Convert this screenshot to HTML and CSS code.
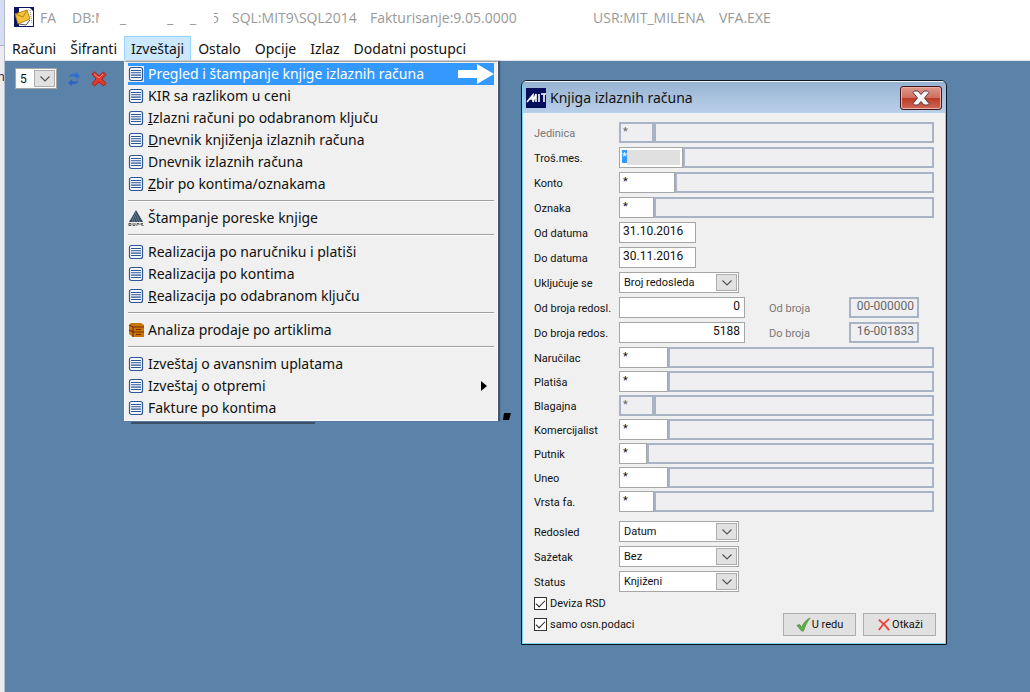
FILE: index.html
```
<!DOCTYPE html>
<html lang="sr-Latn">
<head>
<meta charset="utf-8">
<title>Fakturisanje</title>
<link rel="stylesheet" href="styles.css">
</head>
<body>
<svg class="defs" aria-hidden="true">
  <symbol id="list" viewBox="0 0 16 16"><rect x="1.5" y="1.5" width="13" height="13" rx="2" fill="#f4f9ff" stroke="#2b5797" stroke-width="1.2"/><path d="M3 4.500h10M3 6.800h10M3 9.100h10M3 11.500h10" stroke="#2b5797" stroke-width="1.100"/></symbol>
  <symbol id="chev" viewBox="0 0 12 8"><path d="M1.500 1.500L6 6l4.500-4.500" fill="none" stroke="#555" stroke-width="1.200"/></symbol>
</svg>
<div class="screen">
  <div class="edge"><span class="edge-top"></span><span class="edge-text">n</span></div>
  <div class="app">
    <header class="titlebar">
      <svg class="app-icon" viewBox="0 0 20 20"><rect width="20" height="20" fill="#0b1560"/><path d="M5 1h11l3 3v15H5z" fill="#fff"/><path d="M16 3l2 14" stroke="#889" stroke-dasharray="1 1"/><path d="M1 7l12-4 3 9-12 5z" fill="#f3c13a" stroke="#a97608" stroke-width=".8"/><path d="M1 7l8 3 4-7" fill="none" stroke="#b8860b"/><path d="M5 17l7 1 4-5" fill="none" stroke="#555"/></svg>
      <span class="t-fa">FA</span><span class="t-db">DB:M</span><span class="t-m1">_</span><span class="t-m2">_</span><span class="t-m3">_</span><span class="t-five"><span>5</span></span><span class="t-sql">SQL:MIT9\SQL2014</span><span class="t-ver">Fakturisanje:9.05.0000</span><span class="t-usr">USR:MIT_MILENA</span><span>VFA.EXE</span>
    </header>
    <nav class="menubar">
      <button>Računi</button><button>Šifranti</button><button class="open">Izveštaji</button><button>Ostalo</button><button>Opcije</button><button>Izlaz</button><button>Dodatni postupci</button>
    </nav>
    <main class="workspace">
      <div class="toolbar">
        <div class="combo small"><select aria-label="Broj"><option>5</option></select><span class="arrow"><svg><use href="#chev"/></svg></span></div>
        <button class="tool" aria-label="Osveži"><svg viewBox="0 0 16 16"><path d="M3 7c0-4 4-5 7-4V1l4 4-4 3V6C7 5 5 5 3 7z" fill="#2f6fd0"/><path d="M12 9c0 4-3 5-6 4v2l-4-3 4-4v2c3 1 4 1 6-1z" fill="#2f62c4"/></svg></button>
        <button class="tool" aria-label="Zatvori"><svg viewBox="0 0 16 16"><path d="M1 3l2.500-2L8 5l4.500-4L15 3.500 11 8l4 4.500-2.500 2.500L8 11l-4.500 4L1 12.500 5 8z" fill="#e2392f" stroke="#a5231c"/><path d="M3 3l5 4 4-4" fill="none" stroke="#f58d80"/></svg></button>
      </div>

      <div class="menu">
        <button class="item selected"><svg><use href="#list"/></svg><span>Pregled i štampanje knjige izlaznih računa</span><svg class="pointer" viewBox="0 0 36 20"><path d="M0 6h19V0l17 10-17 10v-6H0z" fill="#fff"/></svg></button>
        <button class="item"><svg><use href="#list"/></svg><span>KIR sa razlikom u ceni</span></button>
        <button class="item"><svg><use href="#list"/></svg><span><u>I</u>zlazni računi po odabranom ključu</span></button>
        <button class="item"><svg><use href="#list"/></svg><span><u>D</u>nevnik knjiženja izlaznih računa</span></button>
        <button class="item"><svg><use href="#list"/></svg><span>Dnevnik izlaznih računa</span></button>
        <button class="item"><svg><use href="#list"/></svg><span><u>Z</u>bir po kontima/oznakama</span></button>
        <hr>
        <button class="item"><svg viewBox="0 0 16 16"><path d="M8 0l7 12H1z" fill="#34495e"/><path d="M7 2l5 10M6 4l3.500 8M5 6l2 6M4 8l1 4" stroke="#8fa1b2" stroke-width=".6"/><path d="M1 13v3M1 13.500h2v2H1M5 13v2.500h2V13M9 16v-2.500h2V15M15 13.500h-2V15h2v1" fill="none" stroke="#555"/></svg><span>Štampanje poreske knjige</span></button>
        <hr>
        <button class="item"><svg><use href="#list"/></svg><span>Realizacija po naručniku i platiši</span></button>
        <button class="item"><svg><use href="#list"/></svg><span>Realizacija po kontima</span></button>
        <button class="item"><svg><use href="#list"/></svg><span><u>R</u>ealizacija po odabranom ključu</span></button>
        <hr>
        <button class="item"><svg viewBox="0 0 16 16"><path d="M1 3l2-2h10l3 2v12H5l-4-3z" fill="#c87605"/><path d="M1 3l4 2h11M5 5v10M5 10h11M1 8l4 2M8 7.500h5M8 12.500h5" fill="none" stroke="#7c2d05" stroke-width="1.200"/></svg><span>Analiza prodaje po artiklima</span></button>
        <hr>
        <button class="item"><svg><use href="#list"/></svg><span>Izveštaj o avansnim uplatama</span></button>
        <button class="item"><svg><use href="#list"/></svg><span>Izveštaj o otpremi</span><svg class="more" viewBox="0 0 6 10"><path d="M0 0l6 5-6 5z"/></svg></button>
        <button class="item"><svg><use href="#list"/></svg><span>Fakture po kontima</span></button>
      </div>
      <span class="menu-shadow"></span>
      <svg class="mark" viewBox="0 0 8 7"><path d="M1 0h7L6 7H0z"/></svg>

      <section class="dialog" role="dialog" aria-labelledby="dt">
        <div class="dialog-title">
          <svg viewBox="0 0 20 20"><rect width="20" height="20" fill="#05105c"/><path d="M1 14l6-7v7M3 11h4M7 14l3-8v8M13 6v8M15 6h5M18 6v8" fill="none" stroke="#fff" stroke-width="1.600"/></svg>
          <h1 id="dt">Knjiga izlaznih računa</h1>
          <button class="close" aria-label="Zatvori prozor"><svg viewBox="0 0 18 16"><path d="M1 2.500L2.500 1H6l3 3.500L12 1h3.500L17 2.500 12.500 8l4.500 5.500-1.500 1.500H12L9 11.500 6 15H2.500L1 13.500 5.500 8z" fill="#f5f5f5" stroke="#5b3a40"/></svg></button>
        </div>
        <form class="form">
          <div class="rows wide">
            <div class="row off"><label for="f1">Jedinica</label><input id="f1" class="w35" value="*" disabled><input class="desc" aria-label="Naziv jedinice" disabled></div>
            <div class="row"><label for="f2">Troš.mes.</label><span class="w64 focus"><mark>*</mark><input id="f2" value=""></span><input class="desc" aria-label="Naziv troškovnog mesta" disabled></div>
            <div class="row"><label for="f3">Konto</label><input id="f3" class="w57" value="*"><input class="desc" aria-label="Naziv konta" disabled></div>
            <div class="row"><label for="f4">Oznaka</label><input id="f4" class="w35" value="*"><input class="desc" aria-label="Naziv oznake" disabled></div>
            <div class="row"><label for="f5">Od datuma</label><input id="f5" class="date" value="31.10.2016"></div>
            <div class="row"><label for="f6">Do datuma</label><input id="f6" class="date" value="30.11.2016"></div>
            <div class="row"><label for="f7">Uključuje se</label><div class="combo"><select id="f7"><option>Broj redosleda</option></select><span class="arrow"><svg><use href="#chev"/></svg></span></div></div>
            <div class="row"><label for="f8">Od broja redosl.</label><input id="f8" class="num" value="0"><label class="side" for="f8b">Od broja</label><input id="f8b" class="doc" value="00-000000" disabled></div>
            <div class="row"><label for="f9">Do broja redos.</label><input id="f9" class="num" value="5188"><label class="side" for="f9b">Do broja</label><input id="f9b" class="doc" value="16-001833" disabled></div>
          </div>
          <div class="rows tight">
            <div class="row"><label for="g1">Naručilac</label><input id="g1" class="w50" value="*"><input class="desc" aria-label="Naziv naručioca" disabled></div>
            <div class="row"><label for="g2">Platiša</label><input id="g2" class="w50" value="*"><input class="desc" aria-label="Naziv platiše" disabled></div>
            <div class="row"><label for="g3">Blagajna</label><input id="g3" class="w35" value="*" disabled><input class="desc" aria-label="Naziv blagajne" disabled></div>
            <div class="row"><label for="g4">Komercijalist</label><input id="g4" class="w50" value="*"><input class="desc" aria-label="Naziv komercijaliste" disabled></div>
            <div class="row"><label for="g5">Putnik</label><input id="g5" class="w28" value="*"><input class="desc" aria-label="Naziv putnika" disabled></div>
            <div class="row"><label for="g6">Uneo</label><input id="g6" class="w50" value="*"><input class="desc" aria-label="Ime" disabled></div>
            <div class="row"><label for="g7">Vrsta fa.</label><input id="g7" class="w35" value="*"><input class="desc" aria-label="Naziv vrste" disabled></div>
          </div>
          <div class="rows wide last">
            <div class="row"><label for="h1">Redosled</label><div class="combo"><select id="h1"><option>Datum</option></select><span class="arrow"><svg><use href="#chev"/></svg></span></div></div>
            <div class="row"><label for="h2">Sažetak</label><div class="combo"><select id="h2"><option>Bez</option></select><span class="arrow"><svg><use href="#chev"/></svg></span></div></div>
            <div class="row"><label for="h3">Status</label><div class="combo"><select id="h3"><option>Knjiženi</option></select><span class="arrow"><svg><use href="#chev"/></svg></span></div></div>
          </div>
          <div class="foot">
            <div class="checks">
              <label><input type="checkbox" checked>Deviza RSD</label>
              <label><input type="checkbox" checked>samo osn.podaci</label>
            </div>
            <div class="actions">
              <button type="button"><svg viewBox="0 0 16 16"><path d="M1 9l3-1 2 3C8 6 11 3 15 1c-3 4-5 8-7 14H6z" fill="#5fae4b" stroke="#3f8a34" stroke-width=".7"/></svg>U redu</button>
              <button type="button"><svg viewBox="0 0 16 16"><path d="M3 3c4 3 8 7 11 11M14 2C9 6 6 9 3 14" fill="none" stroke="#e8453c" stroke-width="2"/></svg>Otkaži</button>
            </div>
          </div>
        </form>
      </section>
    </main>
  </div>
</div>
</body>
</html>
```
FILE: styles.css
```
* { box-sizing: border-box; }
body { margin: 0; font-family: "Noto Sans", "Open Sans", sans-serif; font-size: 14px; color: #111; background: #fff; }
button, input, select { font: inherit; color: inherit; margin: 0; }
button { padding: 0; border: 0; background: none; }
.defs { position: absolute; width: 0; height: 0; }
.screen { display: flex; min-height: 100vh; overflow: hidden; }
.edge { flex: 0 0 5px; overflow: hidden; background: #ececee; border-right: 1px solid #b5bccb; }
.edge-top { display: block; height: 46px; background: #d5dcf4; border-bottom: 1px solid #a9afd0; }
.edge-text { display: block; margin-top: 21px; font-size: 13px; color: #425; text-indent: -3px; }
.app { flex: 1; min-width: 0; display: flex; flex-direction: column; }

.titlebar { display: flex; align-items: center; height: 36px; padding: 0 0 2px 9px; color: #999; font-family: "Open Sans", sans-serif; white-space: pre; }
.titlebar span { flex: none; }
.app-icon { width: 20px; height: 20px; margin-right: 6px; }
.t-fa { width: 32px; }
.t-db { width: 27px; overflow: hidden; margin-right: 21px; }
.t-m1 { width: 47px; }
.t-m2 { width: 23px; }
.t-m3 { width: 24px; }
.t-five { display: flex; justify-content: flex-end; width: 5px; overflow: hidden; margin-right: 13px; }
.t-sql { width: 138px; }
.t-ver { width: 223px; }
.t-usr { width: 126px; }

.menubar { display: flex; height: 25px; border-bottom: 1px solid #e6e6e6; }
.menubar button { padding: 0 7px; white-space: nowrap; }
.menubar .open { background: #cce8ff; border: 1px solid #99d1ff; border-bottom: 0; padding: 0 6px; }

.workspace { position: relative; flex: 1; background: #5b82a8; }
.toolbar { display: flex; align-items: center; gap: 9px; padding: 7px 0 0 10px; }
.tool { width: 16px; height: 16px; }
.tool svg { display: block; width: 16px; height: 16px; }

.combo { display: flex; width: 120px; height: 21px; padding: 1px; border: 1px solid #a6a6a6; background: #fff; }
.combo select { flex: 1; min-width: 0; appearance: none; border: 0; padding: 0 3px; background: #fff; }
.combo .arrow { display: flex; align-items: center; justify-content: center; width: 21px; border: 1px solid #adadad; background: #e1e1e1; }
.combo .arrow svg { width: 12px; height: 8px; }
.combo.small { width: 42px; font-family: Roboto, sans-serif; font-size: 12px; }

.menu { position: absolute; left: 119px; top: 0; width: 374px; padding: 1px 3px; background: #f0f0f0; border: 1px solid #fbfbfb; border-top-color: #a0a0a0; box-shadow: 2px 0 1px #41566d; }
.item { display: flex; align-items: center; gap: 4px; width: 100%; height: 22px; line-height: 20px; text-align: left; white-space: nowrap; }
.item svg { flex: none; width: 16px; height: 16px; }
.item.selected { background: #3399ff; color: #fff; }
.item.selected > svg:first-child { background: #f0f0f0; }
.item .pointer { width: 36px; height: 20px; margin-left: auto; }
.item .more { width: 6px; height: 10px; margin: 0 7px 0 auto; }
.menu hr { height: 2px; margin: 5px 0; border: 0; border-top: 1px solid #a0a0a0; border-bottom: 1px solid #fff; }
.menu-shadow { position: absolute; left: 126px; top: 361px; width: 184px; height: 2px; background: #3c5169; }
.mark { position: absolute; left: 498px; top: 352px; width: 8px; height: 7px; }

.dialog { position: absolute; left: 516px; top: 19px; width: 426px; border: 1px solid #0b1420; border-radius: 6px 6px 0 0; box-shadow: inset 0 0 0 1px #7fd6f0; background: #f0f0f0; overflow: hidden; }
.dialog-title { display: flex; align-items: center; height: 32px; margin: 0 1px; padding: 0 3px; border-top: 1px solid #f4f8fc; background: linear-gradient(#98b4d3, #b8cfe9); }
.dialog-title > svg { width: 20px; height: 20px; margin-right: 4px; }
.dialog-title h1 { flex: 1; margin: 0; font-size: 14px; font-weight: 400; }
.close { display: flex; align-items: center; justify-content: center; width: 42px; height: 24px; border: 1px solid #43161d; border-radius: 3px; box-shadow: inset 0 0 0 1px #eab0a4; background: linear-gradient(#dd9a8d, #cf6f60 48%, #b93a22 50%, #d0695a); }
.close svg { width: 18px; height: 16px; }

.form { padding: 9px 12px 8px; font-family: Roboto, sans-serif; font-size: 11px; }
.rows { display: grid; }
.wide { grid-auto-rows: 25px; }
.tight { grid-auto-rows: 24px; }
.last { margin-top: 6px; }
.row { display: flex; align-items: flex-start; }
.row label { width: 85px; padding-top: 5px; line-height: 14px; white-space: nowrap; }
.row .side { width: 80px; margin-left: 24px; color: #777; }
.row.off label { color: #777; }
.row input { height: 21px; padding: 0 4px 3px 3px; border: 1px solid #a6a6a6; border-radius: 0; background: #fff; outline: 0; }
.row input:disabled { border: 2px solid #a8b4c6; background: #efeff1; color: #666; padding: 0 3px 3px 2px; }
.row .desc { flex: 1; min-width: 0; }
.row .w28 { width: 28px; }
.row .w35 { width: 35px; }
.row .w50 { width: 49px; }
.row .w57 { width: 56px; }
.row .w64 { width: 64px; }
.focus { display: flex; height: 21px; padding: 2px; border: 1px solid #a6a6a6; background: #fff; }
.focus mark { width: 5px; height: 13px; background: #3399ff; color: #fff; line-height: 13px; }
.row .focus input { flex: 1; min-width: 0; height: 100%; border: 0; background: #e0e0e0; }
.row .date { width: 77px; font-size: 12px; }
.row .num { width: 126px; text-align: right; font-size: 12px; }
.row .doc { width: 70px; text-align: right; font-size: 12px; }
.foot { display: flex; justify-content: space-between; align-items: flex-end; }
.checks { display: grid; gap: 7px; padding-bottom: 5px; }
.checks label { display: flex; align-items: center; gap: 3px; height: 14px; }
.checks input { appearance: none; width: 13px; height: 13px; border: 1px solid #333; background: #fff; }
.checks input:checked::before { content: ""; display: block; width: 8px; height: 4px; margin: 2px 1px; border-left: 1px solid #222; border-bottom: 1px solid #222; transform: rotate(-45deg); }
.actions { display: flex; gap: 7px; margin-right: -2px; }
.actions button { display: flex; align-items: center; justify-content: center; gap: 1px; width: 73px; height: 23px; border: 1px solid #adadad; background: #e1e1e1; }
.actions svg { width: 15px; height: 15px; }
```
